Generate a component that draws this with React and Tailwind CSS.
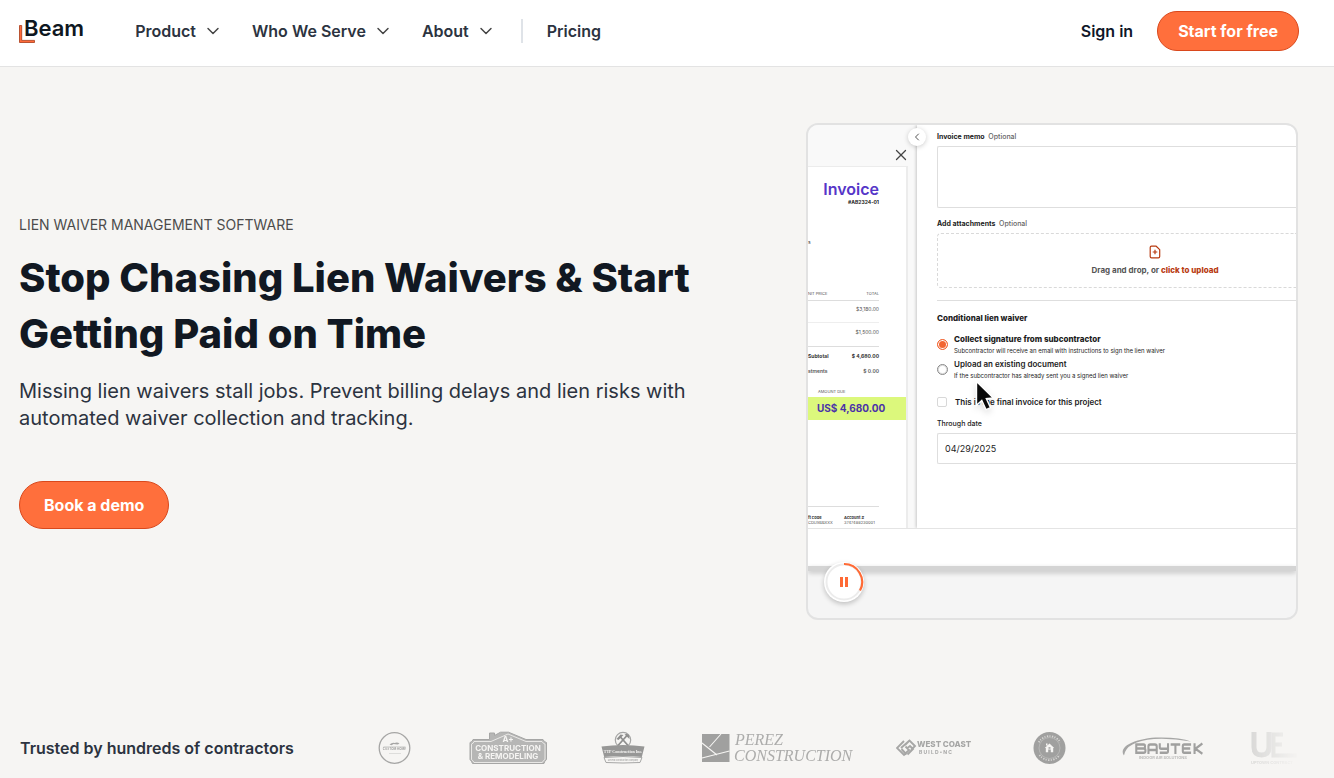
import { ChevronDown, ChevronLeft, X } from "lucide-react";

const menus = ["Product", "Who We Serve", "About"];

function Logo() {
  return (
    <a href="#" className="relative pb-1.5 pl-[5px] text-[22px] leading-8 font-semibold text-[#0f1721]">
      <svg
        className="absolute bottom-[7px] left-0 h-[18px] w-4"
        viewBox="0 0 16 18"
        aria-hidden="true"
      >
        <path d="M.5.5h2.200v14.900h12.800v2.100H.5z" fill="#ff6a3a" stroke="#a83a17" strokeWidth=".8" />
      </svg>
      <span className="relative">Beam</span>
    </a>
  );
}

function Header() {
  return (
    <header className="flex items-center border-b border-[#e3e3e3] bg-white pt-[11px] pr-[35px] pb-[15px] pl-[19px]">
      <Logo />
      <nav className="ml-[51px] flex items-center text-base font-semibold text-[#2c3340]">
        {menus.map((label) => (
          <button key={label} type="button" className="mr-[29px] flex items-center gap-[7px]">
            {label}
            <ChevronDown size={20} strokeWidth={1.75} className="text-[#444]" />
          </button>
        ))}
        <span className="mr-6 -ml-1 h-6 w-0.5 bg-[#dfe3e8]" />
        <a href="#">Pricing</a>
      </nav>
      <div className="ml-auto flex items-center gap-6">
        <a href="#" className="text-base font-semibold text-[#0f1729]">
          Sign in
        </a>
        <button
          type="button"
          className="h-10 rounded-full border border-[#d9481c] bg-[#ff6f3c] px-5 text-base font-bold text-white"
        >
          Start for free
        </button>
      </div>
    </header>
  );
}

function InvoiceRow({ left, right, className }) {
  return (
    <div className={`flex items-center pr-[27px] ${className}`}>
      <span className="whitespace-nowrap">{left}</span>
      <span className="ml-auto">{right}</span>
    </div>
  );
}

// the sheet is scrolled sideways, only its right-hand columns show
function InvoiceSheet() {
  return (
    <div className="flex w-[109px] shrink-0 flex-col bg-[#f9f9f9]">
      <button type="button" aria-label="Close invoice" className="mt-[21px] mr-[7px] mb-0.5 self-end text-[#444]">
        <X size={18} strokeWidth={1.75} />
      </button>
      <div className="mr-[9px] flex-1 overflow-hidden border-t border-r-2 border-[#ececec] bg-white text-[5px] leading-[6px] text-[#555]">
        <p className="mt-3 pr-[27px] text-right text-base leading-5 font-semibold text-[#5636c8]">Invoice</p>
        <p className="pr-[27px] text-right font-bold text-[#222]">#AB2324-01</p>
        <p className="mt-[34px] text-[#333]">s</p>
        <InvoiceRow left="NIT PRICE" right="TOTAL" className="mt-[43px] h-3 text-[4px]" />
        <div className="mr-[27px] border-t border-[#ddd]" />
        <InvoiceRow right="$3,180.00" className="h-[15px]" />
        <div className="mr-[27px] mt-1.5 border-t border-[#eee]" />
        <InvoiceRow right="$1,500.00" className="h-[17px]" />
        <div className="mr-[27px] mt-1.5 border-t border-[#ddd]" />
        <InvoiceRow left="Subtotal" right="$ 4,680.00" className="h-[18px] font-bold text-[#333]" />
        <InvoiceRow left="stments" right="$ 0.00" className="h-3 font-semibold" />
        <p className="mt-3 pl-2.5 text-[4px]">AMOUNT DUE</p>
        <p className="mt-0.5 bg-[#dcf87c] pl-[9px] text-[10px] leading-[23px] font-bold whitespace-nowrap text-[#4a32a8]">
          US$ 4,680.00
        </p>
        <div className="mt-[86px] mr-[27px] border-t border-[#ddd]" />
        <div className="mt-2 flex gap-3 text-[4px] leading-[5px] whitespace-nowrap">
          <p className="w-6">
            <b className="text-[#333]">ft code</b>
            <br />
            CDUSBBXXX
          </p>
          <p>
            <b className="text-[#333]">Account #</b>
            <br />
            3747488230001
          </p>
        </div>
      </div>
    </div>
  );
}

function WaiverOption({ id, title, hint, strong, defaultChecked }) {
  return (
    <div className="flex h-[25px] items-center gap-1.5">
      <input
        id={id}
        type="radio"
        name="waiver"
        defaultChecked={defaultChecked}
        className="h-[11px] w-[11px] appearance-none rounded-full border border-[#888] bg-white shadow-[inset_0_0_0_1px_#ddd] checked:border-[#f26532] checked:bg-[#f26532] checked:shadow-[inset_0_0_0_1px_white]"
      />
      <label htmlFor={id} className="whitespace-nowrap text-[#1c1c1c]">
        <span className={`block text-[8px] leading-[11px] ${strong ? "font-extrabold" : "font-semibold"}`}>
          {title}
        </span>
        <span className="block text-[6px] leading-[11px]">{hint}</span>
      </label>
    </div>
  );
}

function UploadIcon() {
  return (
    <svg
      className="h-3.5 w-3.5 text-[#b83a10]"
      viewBox="0 0 14 14"
      fill="none"
      stroke="currentColor"
      strokeWidth="1.200"
      strokeLinejoin="round"
      aria-hidden="true"
    >
      <path d="M3.500 1.200h4.700l3.500 3.400v6.900q0 1.300-1.300 1.300H3.500q-1.300 0-1.300-1.300v-9q0-1.300 1.300-1.300zM7 4.700v4.600M4.700 7h4.600" />
    </svg>
  );
}

function WaiverForm() {
  return (
    <form className="relative flex-1 bg-white pt-[7px] pl-5 text-[7px] leading-[10px] text-[#1c1c1c] shadow-[-1px_0_3px_rgba(0,0,0,0.2)]">
      <button
        type="button"
        aria-label="Collapse"
        className="absolute top-[3px] -left-[9px] flex h-[18px] w-[18px] items-center justify-center rounded-full bg-white shadow-[0_1px_5px_rgba(0,0,0,0.2)]"
      >
        <ChevronLeft size={12} className="text-[#555]" />
      </button>
      <label htmlFor="memo" className="block font-bold">
        Invoice memo <span className="ml-0.5 font-medium text-[#666]">Optional</span>
      </label>
      <textarea
        id="memo"
        className="mt-1 block h-[62px] w-full resize-none rounded-l-xs border border-r-0 border-[#dedede]"
      />
      <p className="mt-[11px] font-bold">
        Add attachments <span className="ml-0.5 font-medium text-[#666]">Optional</span>
      </p>
      <div className="mt-1 h-[55px] rounded-l-sm border border-r-0 border-dashed border-[#d9d9d9] pt-[11px]">
        <div className="ml-[150px] flex w-[134px] flex-col items-center whitespace-nowrap">
          <UploadIcon />
          <p className="mt-1.5 text-[8px] font-bold text-[#555]">
            Drag and drop, or{" "}
            <a href="#" className="font-extrabold text-[#b83a10]">
              click to upload
            </a>
          </p>
        </div>
      </div>
      <hr className="mt-3 border-[#dedede]" />
      <p className="mt-3 mb-[9px] text-[8px] font-extrabold">Conditional lien waiver</p>
      <WaiverOption
        id="collect"
        title="Collect signature from subcontractor"
        hint="Subcontractor will receive an email with instructions to sign the lien waiver"
        strong
        defaultChecked
      />
      <WaiverOption
        id="upload"
        title="Upload an existing document"
        hint="If the subcontractor has already sent you a signed lien waiver"
      />
      <div className="mt-3.5 flex items-center gap-2">
        <input
          id="final"
          type="checkbox"
          className="h-2.5 w-2.5 appearance-none rounded-xs border border-[#d8d8d8] bg-white"
        />
        <label htmlFor="final" className="text-[8px] leading-3 font-semibold">
          This is the final invoice for this project
        </label>
      </div>
      <label htmlFor="through" className="mt-[11px] block font-medium">
        Through date
      </label>
      <input
        id="through"
        type="text"
        defaultValue="04/29/2025"
        className="mt-1 block h-[31px] w-full rounded-l-xs border border-r-0 border-[#dedede] pl-[7px] text-[9px]"
      />
      <svg className="absolute top-[254px] left-[55px] h-9 w-7 drop-shadow-md" viewBox="0 0 28 36" aria-hidden="true">
        <path
          d="M4.500 2.500v23.800l5.300-4.800 4.300 9.200 4.400-2-4.200-9 7-.8z"
          fill="#0a0a0a"
          stroke="#fff"
          strokeWidth="1.400"
        />
      </svg>
    </form>
  );
}

function VideoCard() {
  return (
    <div className="relative h-[497px] w-full max-w-[492px] shrink-0 overflow-hidden rounded-xl border-2 border-[#e2e2e2] bg-[#f5f5f5] lg:w-[492px]">
      <div className="flex h-[403px] overflow-hidden">
        <InvoiceSheet />
        <WaiverForm />
      </div>
      <div className="h-[38px] border-t border-[#e4e4e4] bg-white" />
      <div className="h-[5px] bg-[#d4d4d4] shadow-[0_2px_5px_rgba(0,0,0,0.2)]" />
      <button
        type="button"
        aria-label="Pause"
        className="absolute bottom-4 left-4 h-10 w-10 rounded-full bg-white shadow-[0_2px_5px_rgba(0,0,0,0.22)]"
      >
        <svg viewBox="0 0 40 40" fill="none" aria-hidden="true">
          <circle cx="20" cy="20" r="17.500" stroke="#ececec" strokeWidth="2" />
          <path d="M20 2a18 18 0 0 1 16 26.500" stroke="#ff6a35" strokeWidth="2.200" />
          <path d="M17.500 15v10M22.500 15v10" stroke="#ff6a35" strokeWidth="3" />
        </svg>
      </button>
    </div>
  );
}

function Hero() {
  return (
    <section className="flex flex-col items-center justify-between gap-10 pt-14 pr-9 pl-[19px] lg:flex-row">
      <div className="max-w-[700px]">
        <p className="text-sm leading-5 text-[#4c4c4c]">LIEN WAIVER MANAGEMENT SOFTWARE</p>
        <h1 className="mt-[15px] text-[40px] leading-14 font-extrabold text-[#111822]">
          Stop Chasing Lien Waivers &amp; Start Getting Paid on Time
        </h1>
        <p className="mt-4 text-xl leading-[27px] text-[#2c3340]">
          Missing lien waivers stall jobs. Prevent billing delays and lien risks with automated waiver collection and
          tracking.
        </p>
        <button
          type="button"
          className="mt-[49px] h-12 rounded-full border border-[#d9481c] bg-[#ff6f3c] px-6 text-base font-bold text-white"
        >
          Book a demo
        </button>
      </div>
      <VideoCard />
    </section>
  );
}

function ClientLogos() {
  return (
    <div className="flex flex-1 gap-10 overflow-hidden text-[#a6a6a5] [mask-image:linear-gradient(to_right,black_91%,transparent)] *:h-9 *:shrink-0">
      <svg className="w-[50px]" viewBox="0 0 50 36">
        <circle cx="22.500" cy="18" r="15.300" fill="none" stroke="currentColor" strokeWidth="1.300" />
        <path d="M17.500 14.500q3-2.500 5-1.500 3-1.500 5 .8l-2 .8-4-.6-2 1.200z" fill="currentColor" />
        <text x="22.500" y="20" textAnchor="middle" fontSize="3" fontWeight="700" fill="currentColor">
          CUSTOM HOME
        </text>
        <path d="M11.500 16.500h22M17 23.500h12" stroke="currentColor" strokeWidth=".5" opacity=".6" />
      </svg>
      <svg className="w-[92px]" viewBox="0 0 92 36">
        <path
          d="M11 9.500h16.500V3h5v2.500l6-3.300 8 0 17.500 7.300h17q1 2.500 3.500 3v17q-2 1.500-2.500 4H10.500q-1-2.500-2.500-4v-17q2.500-.5 3-3z"
          fill="#b6b6b5"
          stroke="#a6a6a5"
        />
        <path
          d="M12 11.500h17L46 4l18 7.500h16q1 2 3 2.600v15.400q-2 1-2.700 3H12q-1-2-2.500-3V14.100q2-.6 2.500-2.600z"
          fill="none"
          stroke="#f6f5f3"
          strokeWidth=".8"
        />
        <g fill="#f6f5f3" textAnchor="middle" fontWeight="700">
          <text x="46" y="12" fontSize="8">
            A+
          </text>
          <text x="46" y="20.500" fontSize="8">
            CONSTRUCTION
          </text>
          <text x="46" y="29" fontSize="8">
            &amp; REMODELING
          </text>
        </g>
      </svg>
      <svg className="w-[60px]" viewBox="0 0 60 36">
        <circle cx="29" cy="10" r="7.700" fill="none" stroke="currentColor" strokeWidth="1.200" />
        <path d="M24 15.500l9-10M34 15.500l-8-9" stroke="#8f8f8e" strokeWidth="1.800" />
        <path d="M22.500 9l4-4.500 3 .5-5 5zM30.500 4.500l5 4.500-.6-4-2-1.200z" fill="#8f8f8e" />
        <path d="M7.500 16.500q21.500-3 43 0l-2.700 10.500q-19-2-37.600 0z" fill="#979796" />
        <path d="M10 27.500q19-2 38 0l-2 5q-17 1-34 0z" fill="#f6f5f3" stroke="currentColor" />
        <text x="29" y="23" textAnchor="middle" fontSize="4" fontWeight="700" fill="#f6f5f3" className="font-['Liberation_Serif',serif]">
          TTP Construction Inc.
        </text>
        <text x="29" y="30.500" textAnchor="middle" fontSize="2" fontWeight="600" fill="currentColor">
          General Construction Company
        </text>
      </svg>
      <svg className="w-[162px]" viewBox="0 0 162 36">
        <path d="M8 4h27.500v28H8z" fill="#a0a09f" />
        <path d="M8 13l15 12M15.500 17L27 4M8 28l27.500-7" stroke="#f6f5f3" strokeWidth="1.100" fill="none" />
        <g className="font-['Liberation_Serif',serif]" fontStyle="italic" fill="#acacab">
          <text x="41" y="15" fontSize="16">
            PEREZ
          </text>
          <text x="40" y="31" fontSize="16">
            CONSTRUCTION
          </text>
        </g>
      </svg>
      <svg className="w-[88px]" viewBox="0 0 88 36">
        <g fill="none" stroke="currentColor" strokeWidth="1.900">
          <path d="M8 11l-7 7 7 7 5-5-3.500-3.500M5 18l8.500-7.500 5.500 5.500-4 4M10.500 24.500l-5-5.500M9 15l4-4M11.500 18l2.500-2 3 3-5.500 5.500" />
        </g>
        <g fill="currentColor">
          <text x="21" y="17" fontSize="8" fontWeight="800">
            WEST COAST
          </text>
          <text x="23" y="24" fontSize="5" fontWeight="700" xmlSpace="preserve">
            B U I L D • N C
          </text>
        </g>
      </svg>
      <svg className="w-[52px]" viewBox="0 0 52 36">
        <circle cx="25.500" cy="18" r="16" fill="#a0a09f" />
        <circle cx="25.500" cy="18" r="10.500" fill="none" stroke="#c4c4c3" strokeWidth=".6" />
        <path
          d="M14.800 12.300a12.300 12.300 0 0 1 21.400 0M15.500 25a12.300 12.300 0 0 0 20 0"
          fill="none"
          stroke="#d8d7d5"
          strokeWidth="1.800"
          strokeDasharray="1.300 1.300 1 1.500"
        />
        <path d="M20.800 18l4.700-4.500 4.700 4.500h-1v4.300h-2.400v-2.800h-2.600v2.800h-2.400V18zM22 13.500h1.500v2H22z" fill="#f6f5f3" />
        <path d="M24.500 17.200h2v1.500h-2z" fill="#a0a09f" />
      </svg>
      <svg className="w-[95px]" viewBox="0 0 95 36">
        <path d="M8 25.500C1 15 25 7 45 7.500q20 .2 30 4Q55 8 38 9 10 11.500 8 25.500z" fill="currentColor" />
        <g fill="none" stroke="#a0a09f" strokeWidth="2.400">
          <path d="M21 14.500h8.500q1.500 0 1.500 1.500v1q0 1.500-1.500 1.500H21M29.500 18.500q2 0 2 1.500v1q0 1.700-2 1.700H21v-9.400M35 24v-7.500q0-2 2-2h5.500q2 0 2 2V24M35 20h9.500M48 13.300v4q0 1.500 1.500 1.500h8v-5.500M57.500 18.500v2.500q0 1.700-1.700 1.700H48M60.500 14.500h11M66 14.500V24M84 14.500h-8q-1.500 0-1.500 1.500v5q0 1.700 1.500 1.700h8M75 18.500h8M88 13.300V24M97 13.500l-8 5.200 8 5" transform="translate(2 0) scale(.87 1)" />
        </g>
        <text x="23" y="29" fontSize="4" fontWeight="700" fill="currentColor" opacity=".7">
          INDOOR AIR SOLUTIONS
        </text>
      </svg>
      <svg className="w-[59px]" viewBox="0 0 59 36">
        <g fill="none" stroke="#c4c4c3">
          <path d="M3 2v15q0 8 7.500 8T18 17V2" strokeWidth="5" />
          <path d="M32 4.500H22.500v21H46M22 14.500h9" strokeWidth="4" />
        </g>
        <text x="0" y="33.500" fontSize="4" fontWeight="700" fill="#c4c4c3">
          UPTOWN CONTRACT
        </text>
      </svg>
    </div>
  );
}

export default function App() {
  return (
    <div className="min-h-screen bg-[#f6f5f3] font-['Inter',sans-serif]">
      <Header />
      <main>
        <Hero />
        <section className="mt-[110px] flex items-center gap-[78px] overflow-hidden pr-[35px] pb-3 pl-5">
          <h2 className="text-base leading-6 font-semibold whitespace-nowrap text-[#2c3340]">
            Trusted by hundreds of contractors
          </h2>
          <ClientLogos />
        </section>
      </main>
    </div>
  );
}
